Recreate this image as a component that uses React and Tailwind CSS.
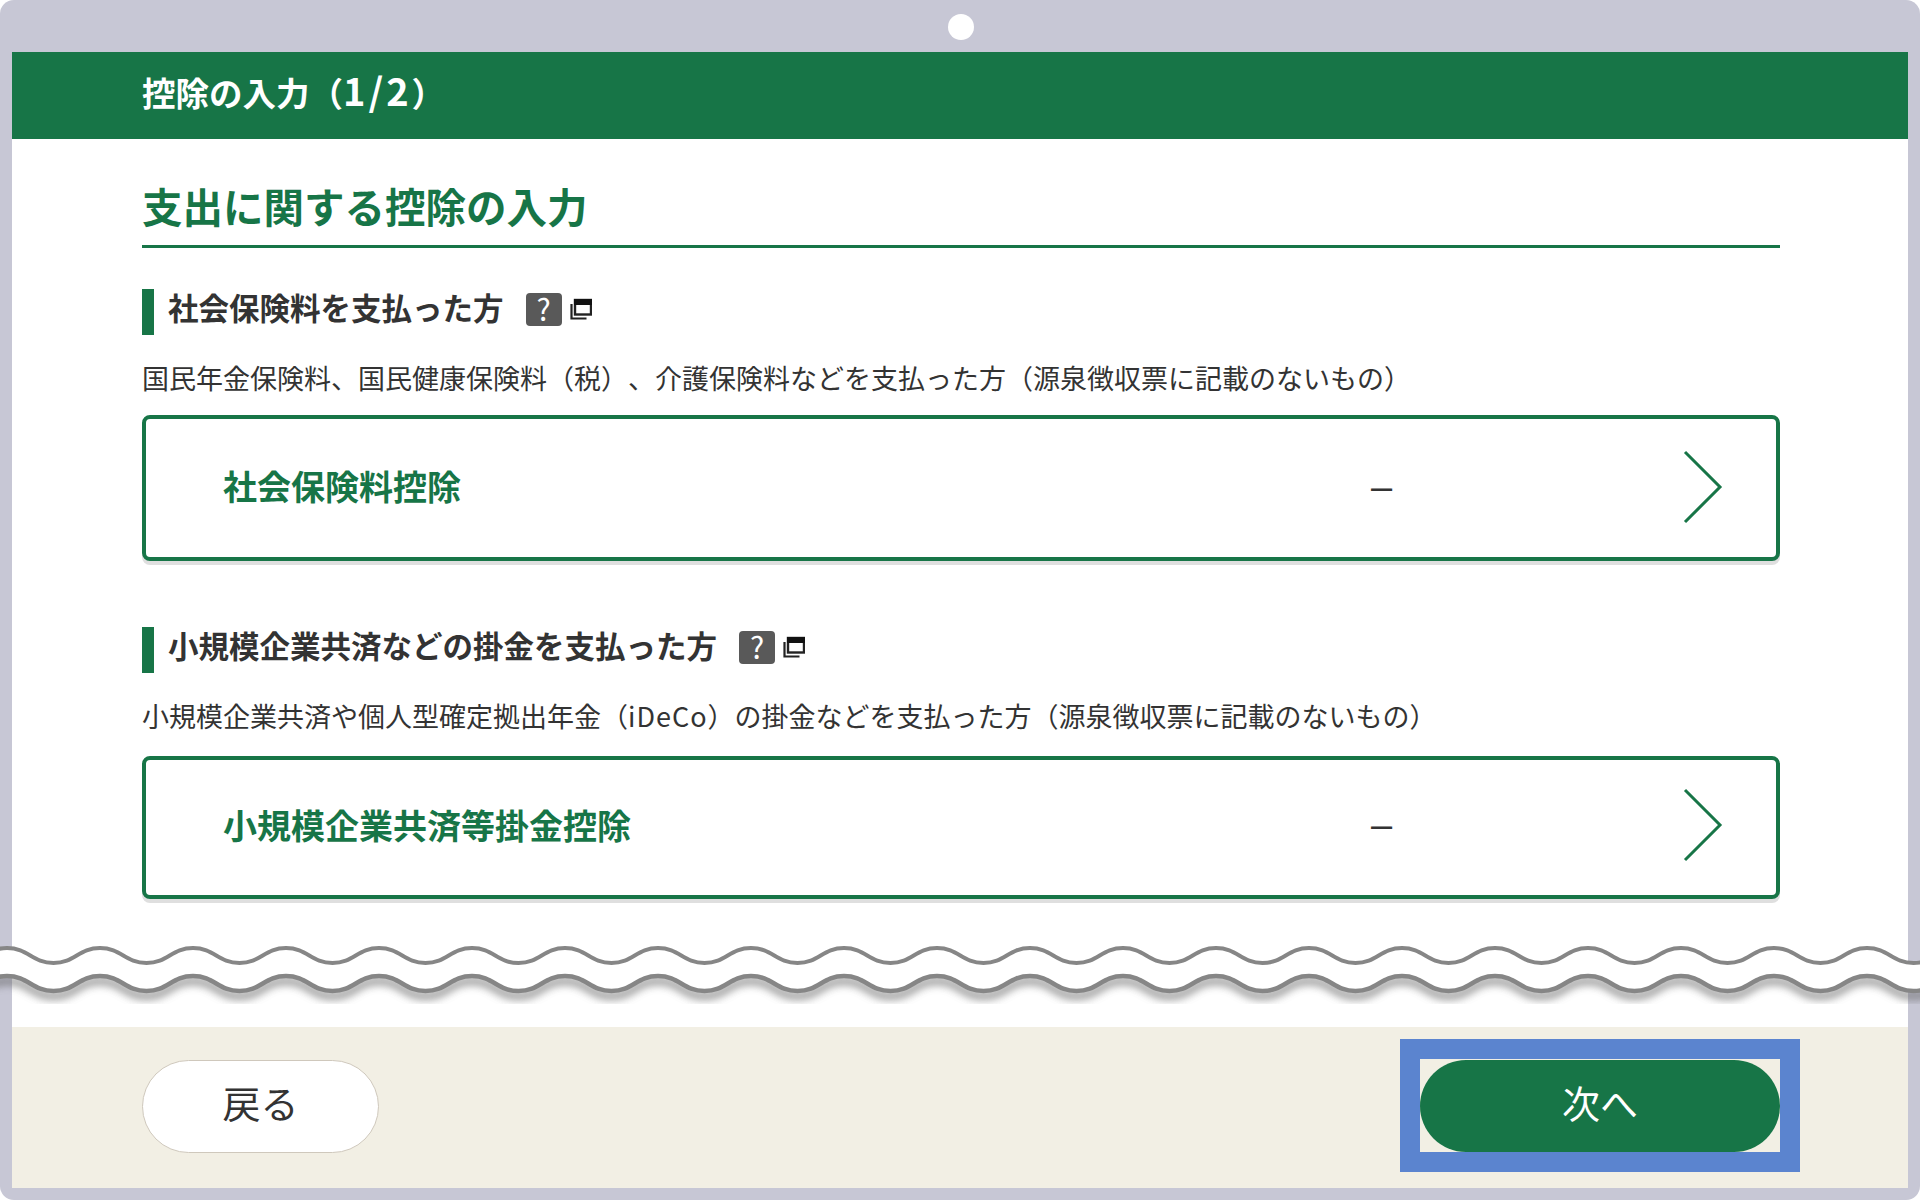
function wavePath(y0, amp) {
  const period = 93;
  const half = period / 2;
  const c = half * 0.46;
  let x = 100 - period * 2;
  let d = `M${x} ${y0}`;
  let up = false;
  while (x < 2100) {
    const nx = x + half;
    const ny = up ? y0 : y0 + amp;
    const py = up ? y0 + amp : y0;
    d += ` C${x + c} ${py} ${nx - c} ${ny} ${nx} ${ny}`;
    x = nx;
    up = !up;
  }
  return d;
}

function reversed(y0, amp) {
  const period = 93;
  const half = period / 2;
  const c = half * 0.46;
  const pts = [];
  let x = 100 - period * 2;
  let up = false;
  while (x < 2100) {
    pts.push([x, up ? y0 + amp : y0]);
    x += half;
    up = !up;
  }
  const last = pts.length - 1;
  let d = `L${pts[last][0]} ${pts[last][1]}`;
  for (let i = last; i > 0; i--) {
    const [ax, ay] = pts[i];
    const [bx, by] = pts[i - 1];
    d += ` C${ax - c} ${ay} ${bx + c} ${by} ${bx} ${by}`;
  }
  return d;
}

function HelpIcons() {
  return (
    <span className="ml-[22px] flex items-center pb-[6px]">
      <span className="flex h-[33px] w-[36px] items-center justify-center rounded-[4px] bg-[#595959] pb-[3px] text-[30px] font-normal leading-none text-white">?</span>
      <svg width="22" height="22" viewBox="0 0 22 22" className="ml-[8px]">
        <path d="M1.5 6v14.5h15" fill="none" stroke="#222" strokeWidth="2.2" />
        <rect x="5" y="2" width="16" height="14.5" fill="#fff" stroke="#222" strokeWidth="2.4" />
        <rect x="4" y="1" width="18" height="6" fill="#111" />
      </svg>
    </span>
  );
}

function SubHeading({ children }) {
  return (
    <div className="flex h-[46px] items-center border-l-[12px] border-[#177547] pl-[14px] text-[30.5px] font-bold leading-none text-[#333]">
      <span className="pb-[9px]">{children}</span>
      <HelpIcons />
    </div>
  );
}

function Card({ label, heightClass, dashClass, arrowClass }) {
  return (
    <div className={`flex items-center rounded-[8px] border-[4px] border-[#177547] bg-white pl-[77px] pr-[53px] shadow-[0_4px_0_#dfdfdf] ${heightClass}`}>
      <span className="w-[1148px] pb-[5px] text-[34px] font-bold leading-none text-[#177547]">{label}</span>
      <span className={`flex-1 font-['Liberation_Sans',sans-serif] text-[38px] leading-none text-[#333] ${dashClass}`}>–</span>
      <svg width="40" height="74" viewBox="0 0 40 74" className={arrowClass}>
        <path d="M2 2 L37 37 L2 72" fill="none" stroke="#177547" strokeWidth="3" />
      </svg>
    </div>
  );
}

export default function App() {
  const top = wavePath(948, 15);
  const bottom = wavePath(976, 15);
  return (
    <div className="relative h-[1200px] w-[1920px] overflow-hidden bg-white font-['Noto_Sans_CJK_JP','Noto_Sans',sans-serif] text-[#333] [text-spacing-trim:space-all]">
      <div className="relative flex h-[1200px] flex-col rounded-[14px] bg-[#c7c7d5] px-3 pb-3 pt-[52px]">
        <span className="absolute left-[948px] top-[14px] h-[26px] w-[26px] rounded-full bg-white" />
        <div className="flex flex-1 flex-col bg-white">
          <div className="flex h-[87px] items-center bg-[#177547] pb-[11px] pl-[130px] pr-[128px] text-[33.5px] font-bold leading-none text-white">
            <span>控除の入力（<span className="text-[38px] tracking-[3px]">1/2</span>）</span>
          </div>
          <div className="flex flex-col pl-[130px] pr-[128px] pt-[45px]">
            <h2 className="border-b-[3px] border-[#177547] pb-[17px] text-[40.5px] font-bold leading-[44px] text-[#177547]">
              支出に関する控除の入力
            </h2>
            <div className="mt-[41px]">
              <SubHeading>社会保険料を支払った方</SubHeading>
            </div>
            <p className="mt-[24px] text-[27px] leading-[38px] text-[#333]">
              国民年金保険料、国民健康保険料（税）、介護保険料などを支払った方（源泉徴収票に記載のないもの）
            </p>
            <div className="mt-[18px]">
              <Card label="社会保険料控除" heightClass="h-[146px]" dashClass="pb-[2px]" arrowClass="mb-[2px]" />
            </div>
            <div className="mt-[66px]">
              <SubHeading>小規模企業共済などの掛金を支払った方</SubHeading>
            </div>
            <p className="mt-[24px] text-[27px] leading-[38px] text-[#333]">
              小規模企業共済や個人型確定拠出年金（<span className="tracking-[1px]">iDeCo</span>）の掛金などを支払った方（源泉徴収票に記載のないもの）
            </p>
            <div className="mt-[21px]">
              <Card label="小規模企業共済等掛金控除" heightClass="h-[143px]" dashClass="pb-[6px]" arrowClass="mb-[5px]" />
            </div>
          </div>
          <div className="mt-auto flex h-[161px] items-start justify-between bg-[#f2efe4] pl-[130px] pr-[108px] pt-[12px]">
            <button className="mt-[21px] h-[93px] w-[237px] rounded-full border border-[#cfc8bc] bg-white pb-[9px] text-[38px] leading-none text-[#333]">
              戻る
            </button>
            <div className="border-[20px] border-[#5b84cf] pt-[1px]">
              <button className="block h-[92px] w-[360px] rounded-full bg-[#177547] pb-[9px] text-[38px] leading-none text-white">
                次へ
              </button>
            </div>
          </div>
        </div>
      </div>
      <svg className="pointer-events-none absolute left-0 top-0" width="1920" height="1200" viewBox="0 0 1920 1200">
        <defs>
          <filter id="waveShadow" x="-5%" y="-50%" width="110%" height="200%">
            <feGaussianBlur stdDeviation="4.5" />
          </filter>
        </defs>
        <path d={bottom} transform="translate(0 5)" fill="none" stroke="#5f5f5f" strokeWidth="7" opacity="0.7" filter="url(#waveShadow)" />
        <path d={`${top} ${reversed(976, 15)} Z`} fill="#fff" />
        <path d={top} fill="none" stroke="#868686" strokeWidth="4" />
        <path d={bottom} fill="none" stroke="#868686" strokeWidth="4.5" />
      </svg>
    </div>
  );
}
